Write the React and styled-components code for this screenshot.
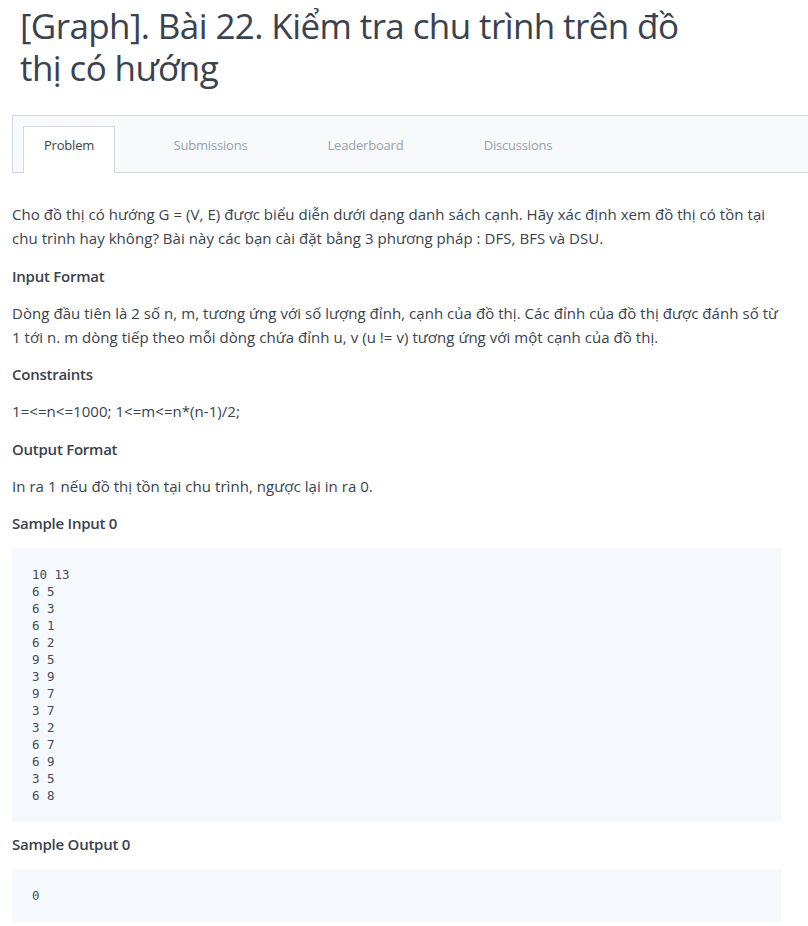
import React from 'react';
import styled, { createGlobalStyle } from 'styled-components';

const GlobalStyle = createGlobalStyle`
  html, body {
    margin: 0;
    padding: 0;
    background: #ffffff;
  }
  body {
    font-family: "Open Sans", "Noto Sans", sans-serif;
    color: #39424e;
    overflow-x: hidden;
  }
`;

const Page = styled.div`
  padding: 0 27px 0 12px;
`;

const Title = styled.h1`
  margin: 0;
  padding: 5px 0 0 8px;
  width: 690px;
  font-size: 35px;
  font-weight: 400;
  line-height: 42px;
  letter-spacing: -0.6px;
  color: #39424e;
`;

const TabBar = styled.div`
  display: flex;
  align-items: flex-end;
  margin: 26px -27px 0 0;
  height: 56px;
  padding-left: 10px;
  background: #f8f9fa;
  border-top: 1px solid #d3d6da;
  border-bottom: 1px solid #d3d6da;
  border-left: 1px solid #d3d6da;
`;

const Tab = styled.div`
  box-sizing: border-box;
  width: ${p => p.$w}px;
  height: 47px;
  margin-bottom: -1px;
  padding-top: 8px;
  display: flex;
  justify-content: center;
  font-size: 13px;
  line-height: 20px;
  letter-spacing: -0.2px;
  color: ${p => (p.$active ? '#39424e' : '#979faf')};
  background: ${p => (p.$active ? '#ffffff' : 'transparent')};
  border: 1px solid ${p => (p.$active ? '#d3d6da' : 'transparent')};
  border-bottom: none;
`;

const Body = styled.div`
  padding-top: 29px;
`;

const Para = styled.p`
  margin: 0 0 13.5px;
  font-size: 15px;
  line-height: 24px;
  letter-spacing: 0.05px;
  color: #39424e;
`;

const Heading = styled.h3`
  margin: 0 0 13px;
  font-size: 15px;
  font-weight: 600;
  line-height: 24px;
  letter-spacing: -0.25px;
  color: #39424e;
`;

const Code = styled.pre`
  margin: 0 0 10px;
  padding: 18px 20px;
  background: #f5f9fd;
  font-family: "DejaVu Sans Mono", "Liberation Mono", monospace;
  font-size: 12.5px;
  line-height: 17px;
  color: #444c57;
`;

const tabs = [
  { label: 'Problem', w: 92, active: true },
  { label: 'Submissions', w: 191 },
  { label: 'Leaderboard', w: 119 },
  { label: 'Discussions', w: 186 },
];

const sampleInput = `10 13
6 5
6 3
6 1
6 2
9 5
3 9
9 7
3 7
3 2
6 7
6 9
3 5
6 8`;

export default function App() {
  return (
    <>
      <GlobalStyle />
      <Page>
        <Title>[Graph]. Bài 22. Kiểm tra chu trình trên đồ thị có hướng</Title>
        <TabBar>
          {tabs.map(t => (
            <Tab key={t.label} $w={t.w} $active={t.active}>
              {t.label}
            </Tab>
          ))}
        </TabBar>
        <Body>
          <Para>
            Cho đồ thị có hướng G = (V, E) được biểu diễn dưới dạng danh sách cạnh. Hãy xác định xem đồ thị có tồn tại
            chu trình hay không? Bài này các bạn cài đặt bằng 3 phương pháp : DFS, BFS và DSU.
          </Para>
          <Heading>Input Format</Heading>
          <Para>
            Dòng đầu tiên là 2 số n, m, tương ứng với số lượng đỉnh, cạnh của đồ thị. Các đỉnh của đồ thị được đánh số từ
            1 tới n. m dòng tiếp theo mỗi dòng chứa đỉnh u, v (u != v) tương ứng với một cạnh của đồ thị.
          </Para>
          <Heading>Constraints</Heading>
          <Para>1=&lt;=n&lt;=1000; 1&lt;=m&lt;=n*(n-1)/2;</Para>
          <Heading>Output Format</Heading>
          <Para>In ra 1 nếu đồ thị tồn tại chu trình, ngược lại in ra 0.</Para>
          <Heading>Sample Input 0</Heading>
          <Code>{sampleInput}</Code>
          <Heading>Sample Output 0</Heading>
          <Code>0</Code>
        </Body>
      </Page>
    </>
  );
}
